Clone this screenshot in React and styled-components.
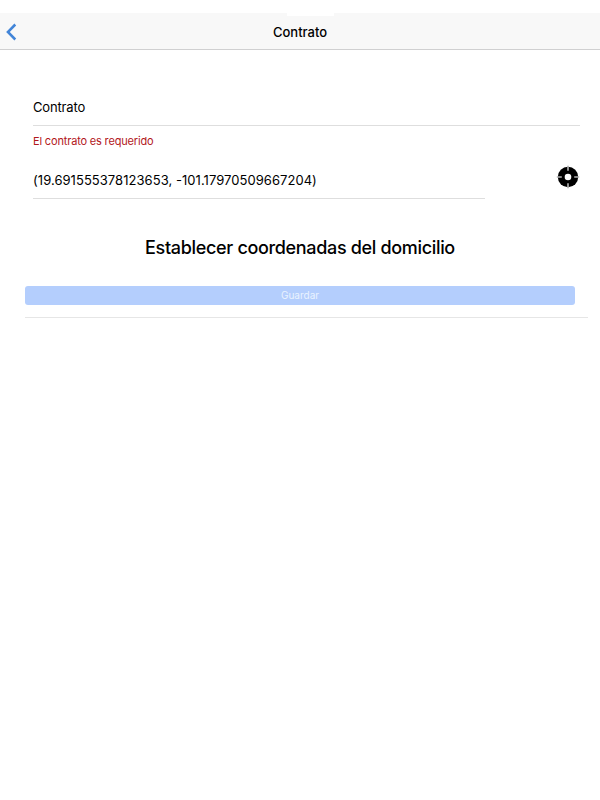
import styled, { createGlobalStyle } from 'styled-components';

const GlobalStyle = createGlobalStyle`
	* {
		box-sizing: border-box;
	}

	body {
		margin: 0;
		background-color: #ffffff;
		color: #000000;
		font-family: Inter, 'Liberation Sans', sans-serif;
	}
`;

const Page = styled.div`
	min-height: 800px;
	padding-top: 13px;
`;

const Header = styled.header`
	display: grid;
	grid-template-columns: 40px 1fr 40px;
	align-items: center;
	height: 37px;
	background-color: #f8f8f8;
	border-bottom: 1px solid #d0d0d1;
	position: relative;
`;

const StatusNotch = styled.span`
	position: absolute;
	top: 0;
	left: 287px;
	width: 47px;
	height: 3px;
	background-color: #ffffff;
`;

const BackButton = styled.button`
	display: flex;
	margin-top: 1px;
	padding: 0 0 0 5px;
	border: 0;
	background: none;
	cursor: pointer;
`;

const Title = styled.h1`
	margin: 2px 0 0;
	font-size: 13px;
	line-height: 16px;
	font-weight: 500;
	text-align: center;
`;

const Form = styled.form`
	padding: 46px 12px 0 25px;
`;

const Row = styled.div`
	display: flex;
	justify-content: space-between;
	padding: 0 8px;
`;

const Field = styled.input`
	display: block;
	width: ${(props) => props.$width}px;
	height: 30px;
	padding: 0 0 7px;
	border: 0;
	border-bottom: 1px solid #dedede;
	outline: none;
	background: none;
	color: #000000;
	font-family: inherit;
	font-size: 13px;
	letter-spacing: ${(props) => props.$spacing}px;

	&::placeholder {
		color: #000000;
		opacity: 1;
	}
`;

const ErrorText = styled.p`
	margin: 8px 8px 17px;
	color: #b2171c;
	font-size: 11px;
	line-height: 14px;
	letter-spacing: -0.17px;
`;

const CoordinatesField = styled(Field)`
	margin-top: 4px;
`;

const LocateButton = styled.button`
	display: flex;
	align-self: flex-start;
	padding: 0;
	border: 0;
	background: none;
	cursor: pointer;
`;

const Heading = styled.h2`
	margin: 37px 13px 0 0;
	font-size: 18px;
	line-height: 24px;
	font-weight: 500;
	letter-spacing: -0.33px;
	text-align: center;
`;

const Footer = styled.div`
	height: 32px;
	margin-top: 26px;
	padding-right: 13px;
	border-bottom: 1px solid #e6e6e6;
`;

const SaveButton = styled.button`
	display: block;
	width: 100%;
	height: 19px;
	padding: 0;
	border: 0;
	border-radius: 3px;
	background-color: #b4cefd;
	color: #eaf3ff;
	font-family: inherit;
	font-size: 10px;
	line-height: 19px;
`;

const BackIcon = () => (
	<svg width='12' height='18' viewBox='0 0 12 18' fill='none'>
		<path d='M10.3 1.5L2.9 9l7.4 7.5' stroke='#4285d8' strokeWidth='2.5' />
	</svg>
);

const LocateIcon = () => (
	<svg width='24' height='24' viewBox='0 0 24 24'>
		<circle cx='12' cy='12' r='10.2' fill='#000000' />
		<circle cx='12' cy='12' r='3.3' fill='#ffffff' />
		<path
			d='M12 0.8v5M12 18.2v5M0.8 12h5M18.2 12h5'
			stroke='#b5b5b5'
			strokeWidth='1.6'
		/>
	</svg>
);

const App = () => {
	return (
		<>
			<GlobalStyle />
			<Page>
				<Header>
					<StatusNotch />
					<BackButton type='button' aria-label='Atrás'>
						<BackIcon />
					</BackButton>
					<Title>Contrato</Title>
				</Header>
				<Form>
					<Row>
						<Field placeholder='Contrato' $width={547} $spacing={-0.15} />
					</Row>
					<ErrorText>El contrato es requerido</ErrorText>
					<Row>
						<CoordinatesField
							defaultValue='(19.691555378123653, -101.17970509667204)'
							$width={452}
							$spacing={0.05}
						/>
						<LocateButton type='button' aria-label='Ubicación'>
							<LocateIcon />
						</LocateButton>
					</Row>
					<Heading>Establecer coordenadas del domicilio</Heading>
					<Footer>
						<SaveButton type='button' disabled>
							Guardar
						</SaveButton>
					</Footer>
				</Form>
			</Page>
		</>
	);
};

export default App;
